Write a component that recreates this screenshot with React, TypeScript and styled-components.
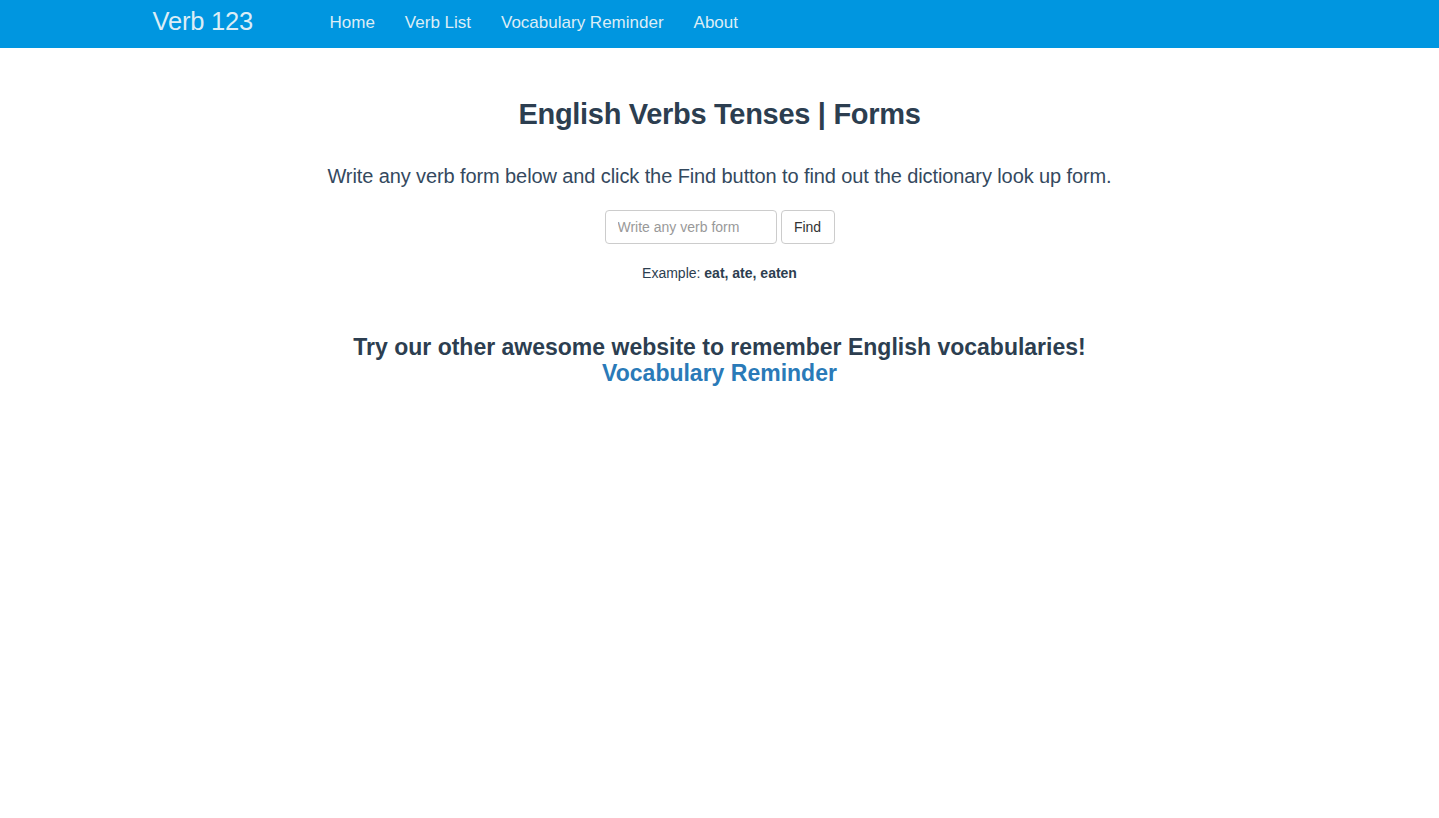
import styled, { createGlobalStyle } from "styled-components";

const GlobalStyle = createGlobalStyle`
  * {
    box-sizing: border-box;
  }
  body {
    margin: 0;
    background: #ffffff;
    font-family: "Liberation Sans", Arial, sans-serif;
    color: #34495e;
  }
`;

const navLinks = ["Home", "Verb List", "Vocabulary Reminder", "About"];

const App: React.FC = () => {
  return (
    <>
      <GlobalStyle />
      <Navbar>
        <NavInner>
          <Brand href="#">Verb 123</Brand>
          <NavList>
            {navLinks.map((label) => (
              <NavItem key={label} href="#">{label}</NavItem>
            ))}
          </NavList>
        </NavInner>
      </Navbar>
      <Main>
        <Title>English Verbs Tenses | Forms</Title>
        <Lead>Write any verb form below and click the Find button to find out the dictionary look up form.</Lead>
        <SearchForm onSubmit={(e) => e.preventDefault()}>
          <SearchInput type="text" placeholder="Write any verb form" />
          <FindButton type="submit">Find</FindButton>
        </SearchForm>
        <Example>
          Example: <strong>eat, ate, eaten</strong>
        </Example>
        <Promo>
          Try our other awesome website to remember English vocabularies!
          <br />
          <PromoLink href="#">Vocabulary Reminder</PromoLink>
        </Promo>
      </Main>
    </>
  );
};

export default App;

const Navbar = styled.nav`
  width: 100%;
  height: 48px;
  background-color: #0096e0;
`;

const NavInner = styled.div`
  width: 1170px;
  margin: 0 auto;
  height: 100%;
  display: flex;
  align-items: center;
  padding: 0 15px;
`;

const Brand = styled.a`
  width: 180px;
  padding-left: 3px;
  font-size: 25.5px;
  color: #dcedf6;
  text-decoration: none;
  letter-spacing: -0.2px;
  margin-top: -5px;
`;

const NavList = styled.div`
  display: flex;
  gap: 30px;
  margin-top: -3px;
`;

const NavItem = styled.a`
  font-size: 17px;
  color: #dcedf6;
  text-decoration: none;
`;

const Main = styled.main`
  display: flex;
  flex-direction: column;
  align-items: center;
  text-align: center;
  padding-top: 48px;
`;

const Title = styled.h1`
  margin: 0;
  font-size: 29px;
  line-height: 36px;
  font-weight: bold;
  color: #2c3e50;
  letter-spacing: -0.3px;
`;

const Lead = styled.p`
  margin: 30px 0 0;
  font-size: 20px;
  line-height: 28px;
  font-weight: 300;
  color: #34495e;
  letter-spacing: -0.1px;
`;

const SearchForm = styled.form`
  display: flex;
  gap: 4px;
  margin-top: 20px;
`;

const SearchInput = styled.input`
  width: 172px;
  height: 34px;
  padding: 6px 12px;
  font-family: "Liberation Sans", Arial, sans-serif;
  font-size: 14px;
  color: #555;
  border: 1px solid #ccc;
  border-radius: 4px;
  outline: none;
  &::placeholder {
    color: #999;
  }
`;

const FindButton = styled.button`
  width: 54px;
  height: 34px;
  padding: 0;
  font-family: "Liberation Sans", Arial, sans-serif;
  font-size: 14px;
  color: #333;
  background: #fff;
  border: 1px solid #ccc;
  border-radius: 4px;
  cursor: pointer;
`;

const Example = styled.p`
  margin: 19px 0 0;
  font-size: 14px;
  line-height: 20px;
  color: #2c3e50;
  strong {
    font-weight: bold;
  }
`;

const Promo = styled.h3`
  margin: 51px 0 0;
  font-size: 23px;
  line-height: 26px;
  font-weight: bold;
  color: #2c3e50;
`;

const PromoLink = styled.a`
  color: #2a7ab8;
  text-decoration: none;
`;
